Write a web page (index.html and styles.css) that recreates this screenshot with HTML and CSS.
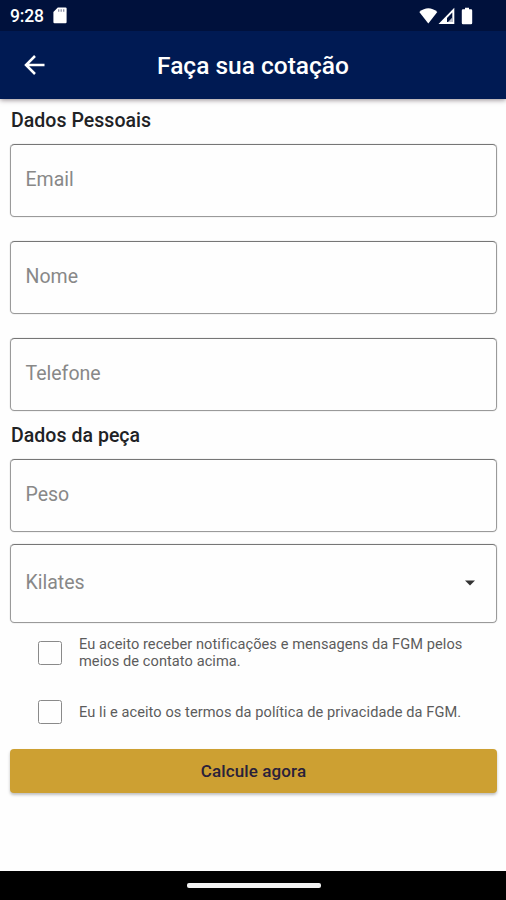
FILE: index.html
```html
<!DOCTYPE html>
<html lang="pt-BR">
<head>
<meta charset="utf-8">
<title>Faça sua cotação</title>
<link rel="stylesheet" href="styles.css">
</head>
<body>
<header class="top">
  <div class="status">
    <span class="clock">9:28</span>
    <svg class="sd" viewBox="0 0 14 17" width="14" height="17"><path d="M4.8 .5H12.5Q13.6 .5 13.6 1.6V15Q13.6 16.2 12.5 16.2H1.5Q.4 16.2 .4 15V5Z" fill="#fff"/><path d="M5.7 2.3v2.5M8.2 2.3v2.5M10.7 2.3v2.5" stroke="#8b90a5" stroke-width="1.3"/></svg>
    <svg class="signals" viewBox="0 0 56 18" width="56" height="18"><path d="M.3 5Q9.300-2.500 18.300 5L9.300 16.500Z" fill="#fff"/><path d="M19.500 17 35.300 .8V17Z" fill="#fff"/><path d="M28 11 33.300 5.500V15H28Z" fill="#00113c"/><path d="M29 15 33.300 10.500V15Z" fill="#b9bdca"/><path d="M46 .8h4v1.500h2Q53.200 2.300 53.200 3.500V16Q53.200 17.200 52 17.200H44Q42.800 17.200 42.800 16V3.500Q42.800 2.300 44 2.300h2Z" fill="#fff"/></svg>
  </div>
  <div class="appbar">
    <svg class="back" viewBox="0 0 22 20" width="22" height="20"><path d="M20.500 10H2M11 1 2 10l9 9" fill="none" stroke="#fff" stroke-width="2.500"/></svg>
    <h1>Faça sua cotação</h1>
  </div>
</header>
<main>
  <h2 class="personal">Dados Pessoais</h2>
  <div class="field">Email</div>
  <div class="field">Nome</div>
  <div class="field">Telefone</div>
  <h2 class="piece">Dados da peça</h2>
  <div class="field weight">Peso</div>
  <div class="field select"><span>Kilates</span><svg viewBox="0 0 10 6" width="10" height="6"><path d="M0 .5h10L5 5.500Z" fill="#333"/></svg></div>
  <label class="check first"><span class="box"></span><span class="terms">Eu aceito receber notificações e mensagens da FGM pelos<br>meios de contato acima.</span></label>
  <label class="check"><span class="box"></span><span class="terms">Eu li e aceito os termos da política de privacidade da FGM.</span></label>
  <button>Calcule agora</button>
</main>
<footer><span class="pill"></span></footer>
</body>
</html>
```
FILE: styles.css
```css
* { box-sizing: border-box; }
body { margin: 0; height: 900px; display: flex; flex-direction: column; background: #fefefe; font-family: Roboto, sans-serif; overflow: hidden; }
.top { height: 98.5px; flex: none; background: #001a53; box-shadow: 0 1px 5px rgba(40, 20, 30, .5); }
.status { height: 31px; display: flex; align-items: center; padding: 0 31px 0 10px; background: #00113c; color: #fff; }
.clock { font-size: 17.5px; font-weight: 500; line-height: 20px; width: 43px; letter-spacing: -.2px; padding-top: 1px; }
.signals { margin-left: auto; }
.appbar { height: 67px; display: grid; grid-template-columns: 48px 1fr 48px; align-items: center; }
.back { margin-left: 24px; }
h1 { margin: 0; color: #fff; font-size: 24.5px; font-weight: 500; line-height: 30px; text-align: center; white-space: nowrap; padding-top: 2px; }
main { flex: 1; display: flex; flex-direction: column; padding: 0 9px 0 10px; }
h2 { margin: 0 1px; font-size: 19.5px; font-weight: 500; line-height: 24px; color: #212225; letter-spacing: .04px; }
.personal { margin-top: 10px; margin-bottom: 11.5px; }
.field { height: 73px; flex: none; border: 1px solid #9a9a9a; border-top-color: #767676; border-radius: 4.5px; padding: 0 22px 2px 14.5px; display: flex; align-items: center; justify-content: space-between; font-size: 19.5px; color: #888; box-shadow: 0 0 1px #999; }
.field + .field { margin-top: 24px; }
.piece { margin-top: 13px; margin-bottom: 11px; }
.field.weight + .select { margin-top: 12px; height: 78.5px; padding-right: 21.5px; padding-bottom: 1px; }
.check { display: flex; align-items: center; gap: 17px; padding-left: 28px; height: 36px; }
.check.first { margin-top: 12.5px; margin-bottom: 23px; }
.box { width: 24px; height: 24px; border: 1.5px solid #8a8a8a; border-radius: 2.5px; flex: none; }
.terms { font-size: 14.6px; line-height: 17px; color: #5c5c5c; letter-spacing: .07px; white-space: nowrap; }
button { height: 44px; margin-top: 19px; border: 0; border-radius: 4px; padding: 0; background: #cda032; color: #29213a; font: 500 17px/20px Roboto, sans-serif; letter-spacing: .12px; box-shadow: 0 2px 3px rgba(0, 0, 0, .25); }
footer { height: 29px; flex: none; background: #000; display: flex; align-items: center; justify-content: center; padding-left: 2px; }
.pill { width: 134px; height: 5px; border-radius: 2px; background: #f2f2f2; }
```
